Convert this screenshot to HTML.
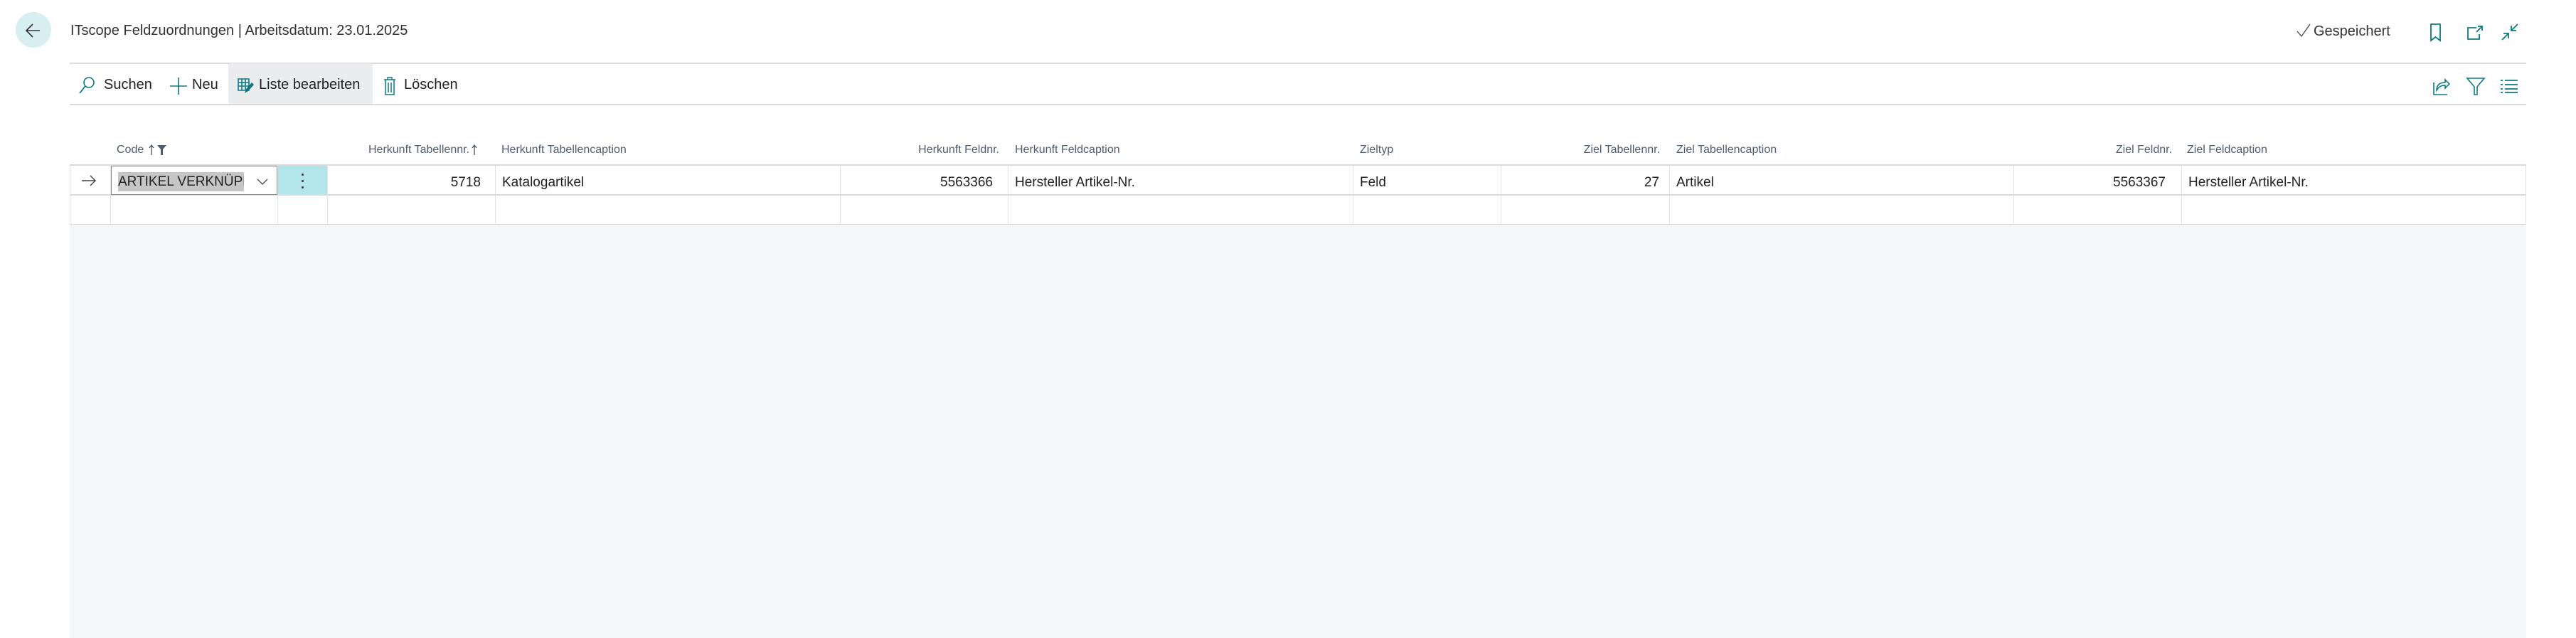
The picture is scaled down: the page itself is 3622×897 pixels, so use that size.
<!DOCTYPE html>
<html><head><meta charset="utf-8"><style>
*{margin:0;padding:0;box-sizing:border-box}
body{width:3622px;height:897px;background:#fff;font-family:"Liberation Sans",sans-serif;position:relative;overflow:hidden;color:#212121}
.a{position:absolute;white-space:nowrap}
.gray{position:absolute;left:98px;top:316px;width:3454px;height:581px;background:#f5f6f8}
.hl{position:absolute;height:2px;background:#d9dadd}
.vl{position:absolute;width:1px;background:#e1e2e5}
.h{position:absolute;top:202px;font-size:16px;color:#505c6d;white-space:nowrap}
.d{position:absolute;top:246px;font-size:19px;color:#212121;white-space:nowrap}
.r{text-align:right}
svg{position:absolute;overflow:visible}
</style></head><body>
<div class="a" style="left:22px;top:17px;width:50px;height:50px;border-radius:50%;background:#d8eff2"></div>
<svg style="left:34px;top:30px" width="26" height="26" viewBox="0 0 26 26"><path d="M22 13H4M12 4l-9 9 9 9" fill="none" stroke="#333" stroke-width="1.6"/></svg>
<div class="a" style="left:99px;top:32px;font-size:20px;color:#333">ITscope Feldzuordnungen | Arbeitsdatum: 23.01.2025</div>

<svg style="left:3228px;top:32px" width="22" height="22" viewBox="0 0 22 22"><path d="M2 12l6 7L20 2" fill="none" stroke="#444" stroke-width="1.3"/></svg>
<div class="a" style="left:3253px;top:33px;font-size:20px;color:#333">Gespeichert</div>
<svg style="left:3415px;top:33px" width="20" height="26" viewBox="0 0 20 26"><path d="M3 1h13v23l-6.5-5L3 24z" fill="none" stroke="#0e7a80" stroke-width="1.8"/></svg>
<svg style="left:3468px;top:35px" width="26" height="22" viewBox="0 0 26 22"><path d="M14 4H2v16h16v-7M16 2h6v6M22 2l-8 8" fill="none" stroke="#0e7a80" stroke-width="1.8"/></svg>
<svg style="left:3516px;top:32px" width="26" height="26" viewBox="0 0 26 26"><path d="M24 2l-9 9M15 4v7h7M2 24l9-9M4 15h7v7" fill="none" stroke="#0e7a80" stroke-width="1.8"/></svg>

<div class="hl" style="left:98px;top:88px;width:3454px"></div>
<div class="a" style="left:321px;top:89px;width:203px;height:58px;background:#ebecee;border-radius:3px"></div>
<div class="hl" style="left:98px;top:146px;width:3454px"></div>
<svg style="left:110px;top:107px" width="26" height="26" viewBox="0 0 26 26"><circle cx="15" cy="9" r="7" fill="none" stroke="#0e7a80" stroke-width="1.6"/><path d="M10 14L2 24" stroke="#0e7a80" stroke-width="1.8"/></svg>
<div class="a" style="left:146px;top:108px;font-size:20px">Suchen</div>
<svg style="left:238px;top:108px" width="26" height="26" viewBox="0 0 26 26"><path d="M13 1v24M1 13h24" stroke="#0e7a80" stroke-width="1.6"/></svg>
<div class="a" style="left:270px;top:108px;font-size:20px">Neu</div>
<svg style="left:334px;top:110px" width="24" height="22" viewBox="0 0 24 22"><path d="M1 1h15v16H1zM1 6h15M1 11h15M6 1v16M11 1v16" fill="none" stroke="#0e7a80" stroke-width="1.6"/><path d="M10 21l2-6 8-9 3 3-8 9z" fill="#0e7a80"/></svg>
<div class="a" style="left:364px;top:108px;font-size:20px">Liste bearbeiten</div>
<svg style="left:539px;top:108px" width="18" height="26" viewBox="0 0 18 26"><path d="M1 4h16M6 4V1h6v3M3 4v21h12V4M7 8v14M11 8v14" fill="none" stroke="#0e7a80" stroke-width="1.5"/></svg>
<div class="a" style="left:568px;top:108px;font-size:20px">Löschen</div>

<svg style="left:3420px;top:108px" width="26" height="26" viewBox="0 0 26 26"><path d="M2 8v17h19M6 19c0-8 5-11 12-11V4l6 6-6 6v-4c-6 0-9 2-12 7z" fill="none" stroke="#0e7a80" stroke-width="1.6"/></svg>
<svg style="left:3468px;top:108px" width="26" height="26" viewBox="0 0 26 26"><path d="M1 2h24l-10 12v11h-4V14z" fill="none" stroke="#0e7a80" stroke-width="1.6"/></svg>
<svg style="left:3516px;top:111px" width="24" height="20" viewBox="0 0 24 20"><path d="M0 2h3M6 2h18M0 8h3M6 8h18M0 14h3M6 14h18M0 19h3M6 19h18" stroke="#0e7a80" stroke-width="1.8"/></svg>

<div class="h" style="left:164px">Code</div>
<svg style="left:209px;top:203px" width="30" height="16" viewBox="0 0 30 16"><path d="M4 15V2M1 5l3-4 3 4" fill="none" stroke="#505c6d" stroke-width="1.4"/><path d="M12 1h13l-5 6v8h-3V7z" fill="#505c6d"/></svg>
<div class="h r" style="left:460px;width:200px">Herkunft Tabellennr.</div>
<svg style="left:662px;top:203px" width="10" height="16" viewBox="0 0 10 16"><path d="M5 15V2M2 5l3-4 3 4" fill="none" stroke="#505c6d" stroke-width="1.4"/></svg>
<div class="h" style="left:705px">Herkunft Tabellencaption</div>
<div class="h r" style="left:1181px;width:224px">Herkunft Feldnr.</div>
<div class="h" style="left:1427px">Herkunft Feldcaption</div>
<div class="h" style="left:1912px">Zieltyp</div>
<div class="h r" style="left:2110px;width:224px">Ziel Tabellennr.</div>
<div class="h" style="left:2357px">Ziel Tabellencaption</div>
<div class="h r" style="left:2830px;width:224px">Ziel Feldnr.</div>
<div class="h" style="left:3075px">Ziel Feldcaption</div>

<div class="hl" style="left:98px;top:231px;width:3454px"></div>
<div class="hl" style="left:98px;top:273px;width:3454px"></div>
<div class="hl" style="left:98px;top:315px;width:3454px"></div>
<div class="vl" style="left:98px;top:232px;height:84px"></div>
<div class="vl" style="left:155px;top:232px;height:84px"></div>
<div class="vl" style="left:390px;top:232px;height:84px"></div>
<div class="vl" style="left:460px;top:232px;height:84px"></div>
<div class="vl" style="left:696px;top:232px;height:84px"></div>
<div class="vl" style="left:1181px;top:232px;height:84px"></div>
<div class="vl" style="left:1417px;top:232px;height:84px"></div>
<div class="vl" style="left:1902px;top:232px;height:84px"></div>
<div class="vl" style="left:2110px;top:232px;height:84px"></div>
<div class="vl" style="left:2347px;top:232px;height:84px"></div>
<div class="vl" style="left:2831px;top:232px;height:84px"></div>
<div class="vl" style="left:3067px;top:232px;height:84px"></div>
<div class="vl" style="left:3551px;top:232px;height:84px"></div>

<svg style="left:114px;top:246px" width="22" height="16" viewBox="0 0 22 16"><path d="M1 8h19M13 1l7 7-7 7" fill="none" stroke="#444" stroke-width="1.4"/></svg>
<div class="a" style="left:156px;top:233px;width:234px;height:41px;border:1.5px solid #8a8d91;background:#fff"></div>
<div class="a" style="left:166px;top:242px;width:177px;height:27px;background:#c6c6c6;overflow:hidden;font-size:19px;line-height:27px;color:#222">ARTIKEL VERKNÜPFUNG</div>
<svg style="left:361px;top:251px" width="16" height="10" viewBox="0 0 16 10"><path d="M1 1l7 7 7-7" fill="none" stroke="#444" stroke-width="1.3"/></svg>
<div class="a" style="left:391px;top:233px;width:69px;height:40px;background:#b2e6ea"></div>
<div class="a" style="left:424px;top:244px;width:3px;height:3px;background:#333;border-radius:50%"></div>
<div class="a" style="left:424px;top:253px;width:3px;height:3px;background:#333;border-radius:50%"></div>
<div class="a" style="left:424px;top:262px;width:3px;height:3px;background:#333;border-radius:50%"></div>

<div class="d r" style="left:460px;width:216px">5718</div>
<div class="d" style="left:706px">Katalogartikel</div>
<div class="d r" style="left:1181px;width:215px">5563366</div>
<div class="d" style="left:1427px">Hersteller Artikel-Nr.</div>
<div class="d" style="left:1912px">Feld</div>
<div class="d r" style="left:2110px;width:223px">27</div>
<div class="d" style="left:2357px">Artikel</div>
<div class="d r" style="left:2831px;width:214px">5563367</div>
<div class="d" style="left:3077px">Hersteller Artikel-Nr.</div>

<div class="gray"></div>
</body></html>
